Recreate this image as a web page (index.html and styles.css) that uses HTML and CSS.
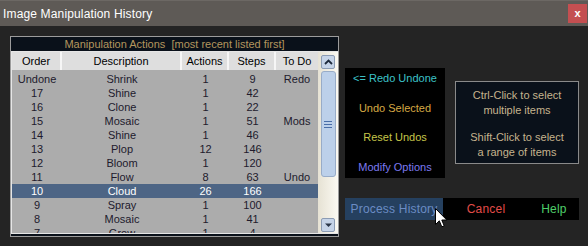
FILE: index.html
```html
<!DOCTYPE html>
<html>
<head>
<meta charset="utf-8">
<title>Image Manipulation History</title>
<link rel="stylesheet" href="styles.css">
</head>
<body>
<div class="titlebar">
  <span class="title">Image Manipulation History</span>
  <span class="close">x</span>
</div>
<div class="main">
  <div class="panel">
    <div class="caption">Manipulation Actions&nbsp; [most recent listed first]</div>
    <div class="list">
      <div class="grid">
        <div class="row head">
          <span>Order</span><span>Description</span><span>Actions</span><span>Steps</span><span>To Do</span>
        </div>
        <div class="rows">
          <div class="row"><span>Undone</span><span>Shrink</span><span>1</span><span>9</span><span>Redo</span></div>
          <div class="row"><span>17</span><span>Shine</span><span>1</span><span>42</span><span></span></div>
          <div class="row"><span>16</span><span>Clone</span><span>1</span><span>22</span><span></span></div>
          <div class="row"><span>15</span><span>Mosaic</span><span>1</span><span>51</span><span>Mods</span></div>
          <div class="row"><span>14</span><span>Shine</span><span>1</span><span>46</span><span></span></div>
          <div class="row"><span>13</span><span>Plop</span><span>12</span><span>146</span><span></span></div>
          <div class="row"><span>12</span><span>Bloom</span><span>1</span><span>120</span><span></span></div>
          <div class="row"><span>11</span><span>Flow</span><span>8</span><span>63</span><span>Undo</span></div>
          <div class="row selected"><span>10</span><span>Cloud</span><span>26</span><span>166</span><span></span></div>
          <div class="row"><span>9</span><span>Spray</span><span>1</span><span>100</span><span></span></div>
          <div class="row"><span>8</span><span>Mosaic</span><span>1</span><span>41</span><span></span></div>
          <div class="row"><span>7</span><span>Grow</span><span>1</span><span>4</span><span></span></div>
        </div>
      </div>
      <div class="scrollbar">
        <div class="sbtn">
          <svg width="9" height="6" viewBox="0 0 9 6"><path d="M1 5 L4.5 1.5 L8 5" fill="none" stroke="#1e2a3c" stroke-width="1.8"/></svg>
        </div>
        <div class="thumb"><i></i><i></i><i></i></div>
        <div class="track"></div>
        <div class="sbtn">
          <svg width="9" height="6" viewBox="0 0 9 6"><path d="M1 1.5 L8 1.5 L4.5 5 Z" fill="#2a3648"/></svg>
        </div>
      </div>
    </div>
  </div>
  <div class="side">
    <div class="top">
      <div class="menu">
        <span class="redo">&lt;= Redo Undone</span>
        <span class="undo">Undo Selected</span>
        <span class="reset">Reset Undos</span>
        <span class="modify">Modify Options</span>
      </div>
      <div class="info">
        <p>Ctrl-Click to select<br>multiple items</p>
        <p>Shift-Click to select<br>a range of items</p>
      </div>
    </div>
    <div class="buttons">
      <span class="process">Process History</span>
      <span class="cancel">Cancel</span>
      <span class="help">Help</span>
    </div>
  </div>
</div>
<svg class="cursor" width="13" height="21" viewBox="0 0 13 21">
  <path d="M0.5 0.5 L0.5 16.5 L4.3 12.8 L6.8 18.8 L9.2 17.8 L6.8 12 L11.8 12 Z" fill="#fff" stroke="#000" stroke-width="1"/>
</svg>
</body>
</html>
```

FILE: styles.css
```css
body {
	margin: 0;
	background-color: #242424;
	font-family: "Liberation Sans", Arial, sans-serif;
	font-size: 11px;
	width: 588px;
	height: 246px;
	overflow: hidden;
}
.titlebar {
	height: 26px;
	background-color: #5e5a56;
	border-top: 1px solid #6c6864;
	box-sizing: border-box;
	display: flex;
	align-items: center;
	justify-content: space-between;
}
.title {
	color: #fff;
	font-size: 12px;
	padding-left: 3px;
	letter-spacing: 0.15px;
}
.close {
	width: 19px;
	height: 19px;
	margin: 0 1px 0 0;
	background-color: #c44f51;
	color: #fff;
	font-weight: bold;
	font-size: 11px;
	text-align: center;
	line-height: 18px;
}
.main {
	display: flex;
	gap: 6px;
	padding: 10px 0 0 10px;
}
.panel {
	width: 329px;
	height: 201px;
	box-sizing: border-box;
	border: 1px solid #9c9c9c;
	background-color: #0a111a;
}
.caption {
	height: 14px;
	line-height: 14px;
	text-align: center;
	color: #b4965e;
}
.list {
	display: flex;
	height: 183px;
	box-sizing: border-box;
	border: 1px solid #e6e6e6;
	border-right: none;
	background-color: #f3f0e4;
}
.grid {
	width: 306px;
	display: flex;
	flex-direction: column;
}
.row {
	display: grid;
	grid-template-columns: 50px 120px 47px 47px 42px;
	height: 14px;
	line-height: 14px;
	text-align: center;
	color: #211a2c;
}
.row.head {
	height: 18px;
	line-height: 18px;
	background-color: #dedede;
	color: #000;
}
.row.head span {
	border-right: 2px solid #f6f6f6;
}
.row.head span:last-child {
	border-right: none;
}
.rows {
	flex: 1;
	background-color: #acacac;
	padding-top: 2px;
	overflow: hidden;
}
.row.selected {
	background-color: #4d6585;
	color: #fff;
}
.scrollbar {
	width: 20px;
	display: flex;
	flex-direction: column;
	align-items: center;
	background: linear-gradient(to right, #e6e2d4, #fbf9f2);
}
.sbtn {
	width: 14px;
	height: 14px;
	margin-top: 3px;
	box-sizing: border-box;
	border: 1px solid #8c9cb4;
	border-radius: 2px;
	background-color: #c6d4e8;
	display: flex;
	align-items: center;
	justify-content: center;
}
.sbtn:last-child {
	margin: 0 0 1px 0;
}
.thumb {
	width: 15px;
	height: 106px;
	margin-top: 2px;
	box-sizing: border-box;
	border: 1px solid #98acc8;
	border-radius: 3px;
	background-color: #bcd0ea;
	display: flex;
	flex-direction: column;
	align-items: center;
	justify-content: center;
	gap: 2px;
}
.thumb i {
	display: block;
	width: 8px;
	height: 1px;
	background-color: #4a6ea8;
}
.track {
	flex: 1;
}
.side {
	width: 234px;
	padding-top: 32px;
}
.top {
	display: flex;
	gap: 10px;
	align-items: flex-start;
}
.menu {
	width: 100px;
	height: 110px;
	box-sizing: border-box;
	padding: 2px 0 3px;
	background-color: #000;
	display: flex;
	flex-direction: column;
	justify-content: space-between;
	text-align: center;
	line-height: 16px;
}
.redo {
	color: #3cc2c8;
}
.undo {
	color: #d6a944;
}
.reset {
	color: #c6c64a;
}
.modify {
	color: #7c7af0;
}
.info {
	width: 124px;
	height: 83px;
	margin-top: 13px;
	box-sizing: border-box;
	border: 1px solid #8a8a8a;
	background-color: #0a111a;
	color: #c6b48e;
	text-align: center;
	line-height: 15px;
	padding-top: 6px;
}
.info p {
	margin: 0 0 12px;
}
.buttons {
	display: flex;
	margin-top: 20px;
	height: 22px;
	line-height: 22px;
	background-color: #000;
	font-size: 12px;
	letter-spacing: 0.2px;
	text-align: center;
}
.process {
	width: 98px;
	background-color: #25405f;
	color: #6b8cc4;
}
.cancel {
	width: 86px;
	color: #e24c48;
}
.help {
	width: 50px;
	color: #4ece6a;
}
.cursor {
	position: absolute;
	left: 435px;
	top: 208px;
}
```
